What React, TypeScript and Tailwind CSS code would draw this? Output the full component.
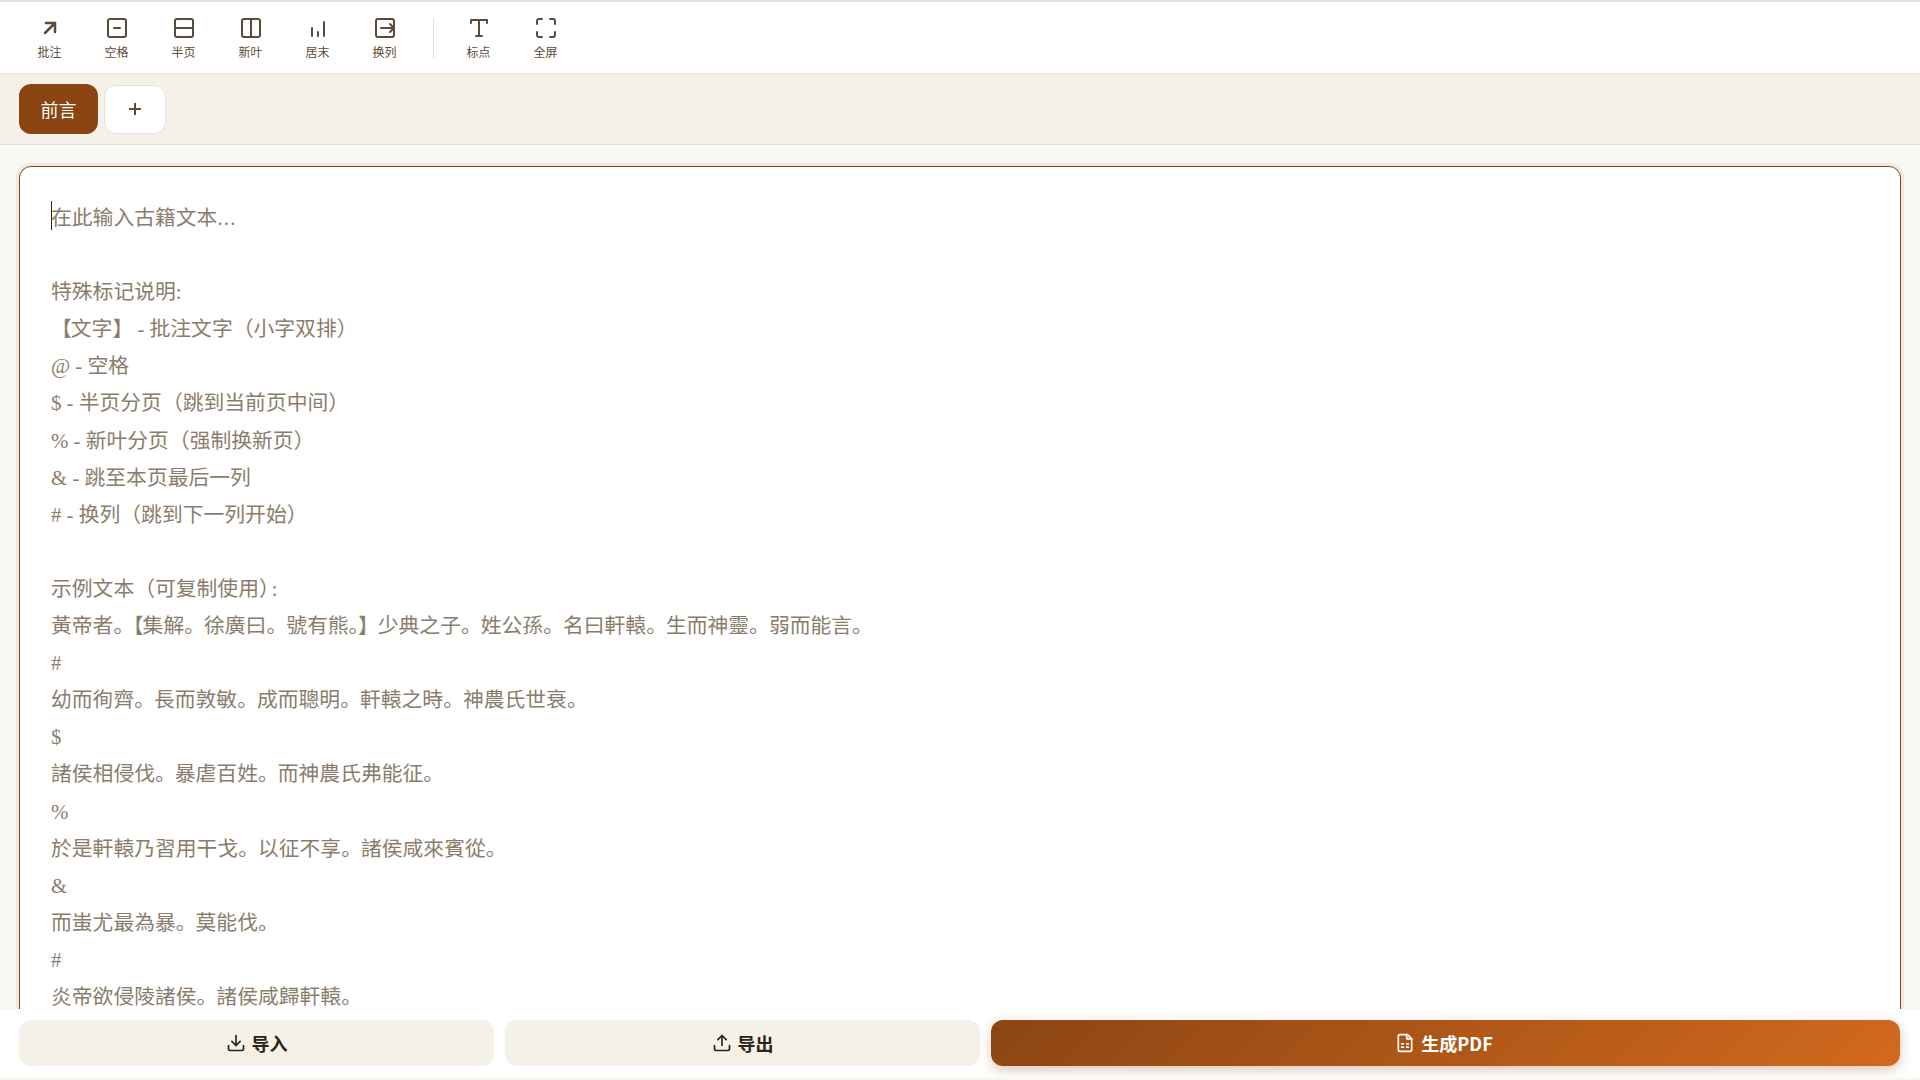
import React from "react";

const Ico = ({ children, w = 2 }: { children: React.ReactNode; w?: number }) => (
  <svg width="24" height="24" viewBox="0 0 24 24" fill="none" stroke="#5c4a3a" strokeWidth={w} strokeLinecap="round" strokeLinejoin="round">
    {children}
  </svg>
);

const tools: { label: string; icon: React.ReactNode }[] = [
  { label: "批注", icon: <Ico w={2.5}><path d="M7 17 17 7" /><path d="M8 7h9v9" /></Ico> },
  { label: "空格", icon: <Ico><rect x="3" y="3" width="18" height="18" rx="2" /><path d="M9 12h6" /></Ico> },
  { label: "半页", icon: <Ico><rect x="3" y="3" width="18" height="18" rx="2" /><path d="M3 12h18" /></Ico> },
  { label: "新叶", icon: <Ico><rect x="3" y="3" width="18" height="18" rx="2" /><path d="M12 3v18" /></Ico> },
  { label: "居末", icon: <Ico><path d="M6 20v-8" /><path d="M12 20v-4" /><path d="M18 20V6" /></Ico> },
  { label: "换列", icon: <Ico><rect x="3" y="3" width="18" height="18" rx="2" /><path d="M8 12h13" /><path d="m17 8 4 4-4 4" /></Ico> },
];
const tools2: { label: string; icon: React.ReactNode }[] = [
  { label: "标点", icon: <Ico><path d="M4 7V4h16v3" /><path d="M9 20h6" /><path d="M12 4v16" /></Ico> },
  { label: "全屏", icon: <Ico><path d="M8 3H5a2 2 0 0 0-2 2v3" /><path d="M21 8V5a2 2 0 0 0-2-2h-3" /><path d="M3 16v3a2 2 0 0 0 2 2h3" /><path d="M16 21h3a2 2 0 0 0 2-2v-3" /></Ico> },
];

const Tool = ({ label, icon }: { label: string; icon: React.ReactNode }) => (
  <button className="flex h-[56px] w-[67px] flex-col items-center justify-center gap-[5px] pb-[1px]">
    {icon}
    <span className="text-[12px] leading-[14px] text-[#5c4a3a]">{label}</span>
  </button>
);

const lines = [
  "在此输入古籍文本...",
  "",
  "特殊标记说明:",
  "【文字】 - 批注文字（小字双排）",
  "@ - 空格",
  "$ - 半页分页（跳到当前页中间）",
  "% - 新叶分页（强制换新页）",
  "& - 跳至本页最后一列",
  "# - 换列（跳到下一列开始）",
  "",
  "示例文本（可复制使用）:",
  "黃帝者。【集解。徐廣曰。號有熊。】少典之子。姓公孫。名曰軒轅。生而神靈。弱而能言。",
  "#",
  "幼而徇齊。長而敦敏。成而聰明。軒轅之時。神農氏世衰。",
  "$",
  "諸侯相侵伐。暴虐百姓。而神農氏弗能征。",
  "%",
  "於是軒轅乃習用干戈。以征不享。諸侯咸來賓從。",
  "&",
  "而蚩尤最為暴。莫能伐。",
  "#",
  "炎帝欲侵陵諸侯。諸侯咸歸軒轅。",
];

function Line({ text }: { text: string }) {
  const parts = text.split(/([。）【】]|\.\.\.)/).filter(Boolean);
  return (
    <div className="h-[37.1px] whitespace-pre">
      {parts.map((p, i) => {
        if (p === "。") return <span key={i} className="tracking-[-1px]">{p}</span>;
        if (p === "【" || p === "】") return <span key={i} className="tracking-[-1px]">{p}</span>;
        if (p === "）" && text.startsWith("示例")) return <span key={i} className="tracking-[-8px]">{p}</span>;
        if (p === "...") return <span key={i} className="tracking-[1.2px]">{p}</span>;
        return <span key={i}>{p}</span>;
      })}
    </div>
  );
}

function Ico2({ d, c }: { d: string[]; c: string }) {
  return (
    <svg width="20" height="20" viewBox="0 0 24 24" fill="none" stroke={c} strokeWidth={2} strokeLinecap="round" strokeLinejoin="round">
      {d.map((p) => (
        <path key={p} d={p} />
      ))}
    </svg>
  );
}

export default function App() {
  return (
    <div className="flex h-[1080px] flex-col overflow-hidden bg-[#faf8f5] font-['Noto_Sans_CJK_SC','Noto_Sans',sans-serif]">
      <header className="flex h-[74px] shrink-0 items-center border-t-2 border-b border-t-[#e8e0d8] border-b-[#e8e0d8] bg-white pl-[16px]">
        {tools.map((t) => (
          <Tool key={t.label} {...t} />
        ))}
        <div className="ml-[15px] mr-[11px] h-[40px] w-px bg-[#e8e0d8]" />
        {tools2.map((t) => (
          <Tool key={t.label} {...t} />
        ))}
      </header>
      <nav className="flex h-[71px] shrink-0 items-center gap-[6px] border-b border-[#e8e0d8] bg-[#f5f0e8] pl-[19px]">
        <button className="flex h-[50px] w-[79px] items-center justify-center rounded-[12px] bg-[#8b4513] text-[18px] text-white">前言</button>
        <button className="flex h-[49px] w-[62px] items-center justify-center rounded-[12px] border border-[#e8e0d8] bg-white">
          <svg width="16" height="16" viewBox="0 0 16 16" fill="none" stroke="#5c4a3a" strokeWidth="2"><path d="M8 2v12M2 8h12" /></svg>
        </button>
      </nav>
      <main className="min-h-0 flex-1 overflow-hidden px-[19px] pt-[21px]">
        <div role="textbox" className="relative h-[900px] rounded-[12px] border border-[#8b4513] bg-white px-[31px] pt-[32px] font-['Liberation_Serif','Noto_Sans_CJK_SC',serif] text-[20.8px] leading-[37.1px] text-[#8b7d6b] shadow-[0_0_0_3px_rgba(139,69,19,0.08)]">
          <span className="absolute left-[31px] top-[34px] h-[29px] w-px bg-[#2c2416]" />
          {lines.map((l, i) => (
            <Line key={i} text={l} />
          ))}
        </div>
      </main>
      <footer className="flex h-[68px] shrink-0 gap-[11px] bg-white px-[19px] pt-[11px]">
        <button className="flex h-[46px] w-[475px] items-center justify-center gap-[6px] rounded-[12px] bg-[#f5f0e8] text-[18px] font-semibold text-[#2c2416]">
          <Ico2 d={["M12 3v12", "m7 10 5 5 5-5", "M21 15v4a2 2 0 0 1-2 2H5a2 2 0 0 1-2-2v-4"]} c="#2c2416" />
          导入
        </button>
        <button className="flex h-[46px] w-[475px] items-center justify-center gap-[6px] rounded-[12px] bg-[#f5f0e8] text-[18px] font-semibold text-[#2c2416]">
          <Ico2 d={["M12 15V3", "m7 8 5-5 5 5", "M21 15v4a2 2 0 0 1-2 2H5a2 2 0 0 1-2-2v-4"]} c="#2c2416" />
          导出
        </button>
        <button className="flex h-[46px] w-[909px] items-center justify-center gap-[6px] rounded-[12px] bg-[linear-gradient(135deg,#8b4513,#d2691e)] pr-[3px] text-[18px] font-semibold text-white shadow-[0_4px_12px_rgba(139,69,19,0.3)]">
          <Ico2 d={["M15 2H6a2 2 0 0 0-2 2v16a2 2 0 0 0 2 2h12a2 2 0 0 0 2-2V7z", "M14 2v5h6", "M10 13H8", "M16 13h-2", "M10 17H8", "M16 17h-2"]} c="#ffffff" />
          生成PDF
        </button>
      </footer>
      <div className="h-[3px] shrink-0 bg-[#faf8f5]" />
    </div>
  );
}
